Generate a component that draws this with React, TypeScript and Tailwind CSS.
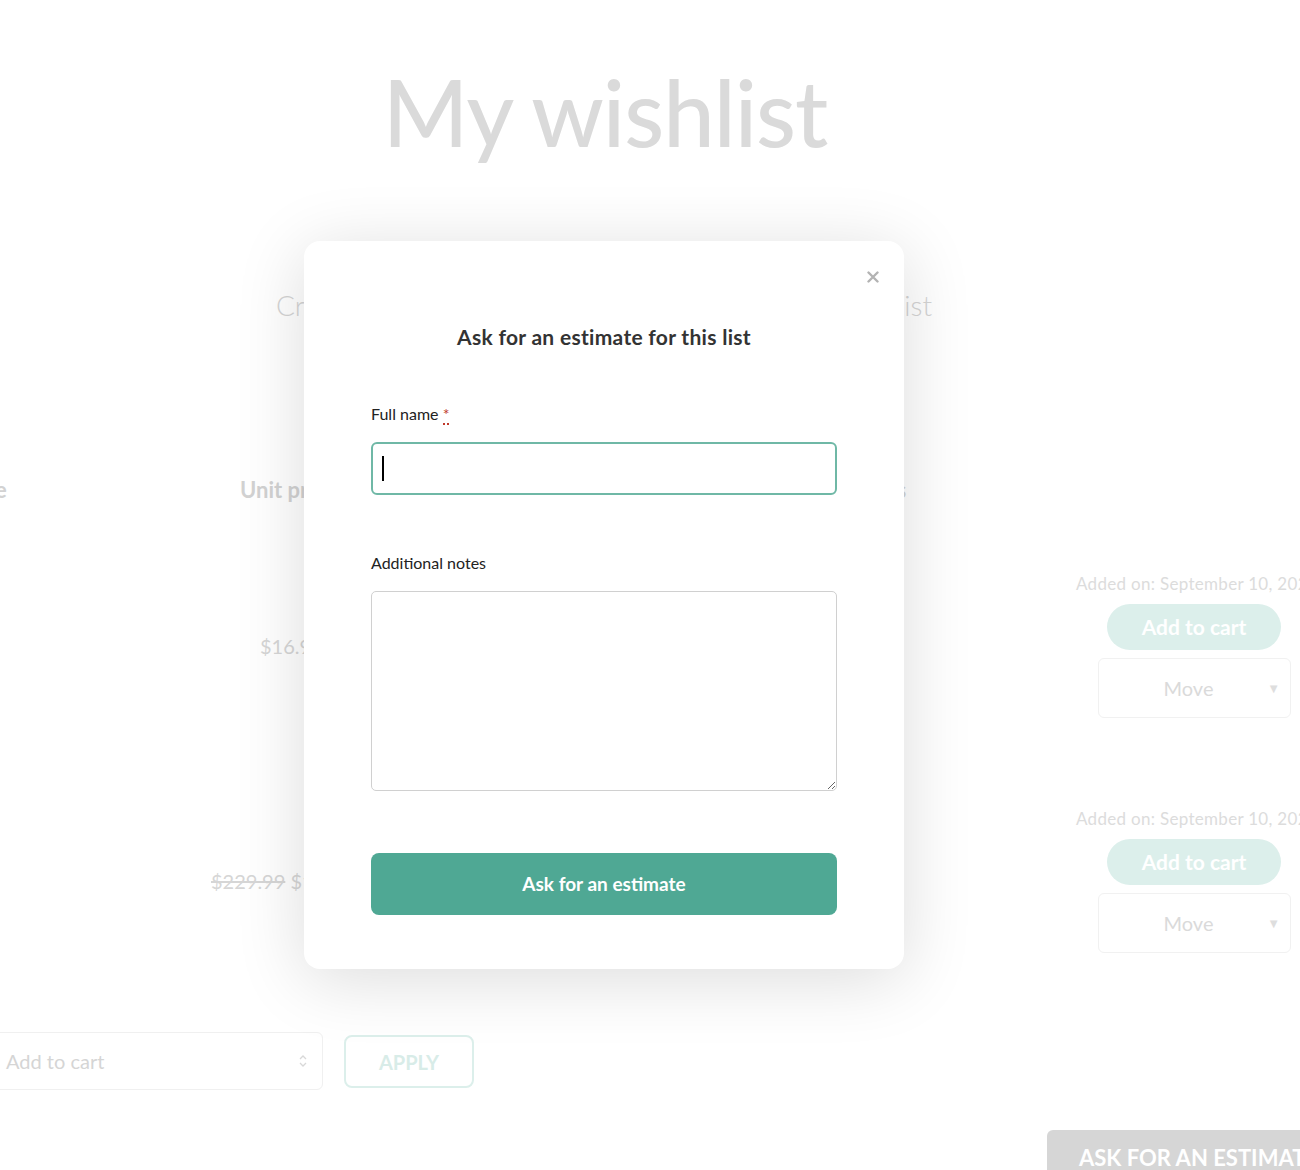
import React from "react";

const font = { fontFamily: "Lato, 'Noto Sans', sans-serif" };

function BgRow({ price, strike }: { price: string; strike?: string }) {
  return (
    <div className="flex h-[235px]">
      <div className="w-[1076px] shrink-0 flex">
        <div className={`${strike ? "w-[211px]" : "w-[260px]"} shrink-0`} />
        <div className="mt-[60px] text-[20px] leading-[24px] text-[#d6d6d6] whitespace-nowrap">
          {strike ? (
            <>
              <span className="line-through">{strike}</span> <span>{price}</span>
            </>
          ) : (
            price
          )}
        </div>
      </div>
      <div className="w-[260px] shrink-0 flex flex-col">
        <div className="text-[17px] leading-[20px] text-[#dcdcdc] whitespace-nowrap tracking-[0.3px]">Added on: September 10, 2024</div>
        <div className="mt-[10px] ml-[31px] w-[174px] h-[46px] rounded-full bg-[#dcefeb] flex items-center justify-center text-white text-[21px] font-bold">
          Add to cart
        </div>
        <div className="mt-[8px] ml-[22px] w-[193px] h-[60px] rounded-[6px] border border-[#f1f1f1] flex items-center relative">
          <span className="flex-1 text-center text-[20px] text-[#dadada] pr-[12px]">Move</span>
          <span className="absolute right-[10px] top-[22px] text-[13px] leading-[14px] text-[#dedede]">▼</span>
        </div>
      </div>
    </div>
  );
}

export default function App() {
  return (
    <div className="relative w-[1300px] h-[1170px] overflow-hidden bg-white" style={font}>
      {/* Background page (faded) */}
      <div className="flex flex-col">
        <h1 className="mt-[64px] pr-[90px] text-center text-[92px] leading-[95px] font-medium text-[#dadada] tracking-[-1px]">My wishlist</h1>
        <div className="mt-[130px] ml-[276px] w-[656px] flex justify-between text-[28px] leading-[32px] font-light text-[#d4d4d4]">
          <span>Create a new list</span>
          <span>Rename this list</span>
        </div>
        <div className="mt-[155px] flex text-[22px] leading-[28px] font-bold text-[#d2d2d2] whitespace-nowrap">
          <div className="w-[370px] -ml-[130px] shrink-0">Product name</div>
          <div className="w-[547px] shrink-0">Unit price</div>
          <div>Stock status</div>
        </div>
        <div className="mt-[70px]">
          <BgRow price="$16.99" />
          <BgRow price="$199.99" strike="$229.99" />
        </div>
        <div className="-mt-[12px] flex items-start">
          <div className="w-[343px] -ml-[20px] h-[58px] rounded-[6px] border border-[#f0f0f0] flex items-center pl-[25px] pr-[14px] text-[20px] text-[#d5d5d5]">
            <span className="flex-1">Add to cart</span>
            <svg width="10" height="16" viewBox="0 0 10 16" fill="none" stroke="#d8d8d8" strokeWidth="1.3">
              <path d="M2 6l3-3 3 3M2 10l3 3 3-3" />
            </svg>
          </div>
          <div className="ml-[21px] mt-[3px] w-[130px] h-[53px] rounded-[8px] border-2 border-[#dcefeb] flex items-center justify-center text-[20px] font-bold text-[#d8ece8]">
            APPLY
          </div>
        </div>
        <div className="mt-[40px] ml-[1047px] w-[300px] h-[60px] rounded-t-[6px] bg-[#d6d6d6] pl-[32px] pt-[11px] text-[22px] font-bold text-white whitespace-nowrap">
          ASK FOR AN ESTIMATE
        </div>
      </div>

      {/* Modal */}
      <div className="absolute left-[304px] top-[241px] w-[600px] h-[728px] rounded-[16px] bg-white px-[67px] pt-[82px] shadow-[0_10px_70px_rgba(0,0,0,0.14)] flex flex-col">
        <button className="absolute right-[25px] top-[30px]" aria-label="Close">
          <svg width="12" height="12" viewBox="0 0 12 12" stroke="#b3b3b3" strokeWidth="2.4" strokeLinecap="round">
            <path d="M1.5 1.5l9 9M10.5 1.5l-9 9" />
          </svg>
        </button>
        <h2 className="text-center text-[21px] leading-[28px] font-bold text-[#333333] tracking-[0.3px]">Ask for an estimate for this list</h2>
        <label className="mt-[51px] text-[16px] leading-[24px] text-[#222222]">
          Full name{" "}
          <abbr className="no-underline text-[#c0392b] border-b-2 border-dotted border-[#c0392b]">*</abbr>
        </label>
        <div className="mt-[16px] h-[53px] rounded-[6px] border-2 border-[#6fb8a6] flex items-center pl-[9px]">
          <span className="block w-[2px] h-[25px] bg-black" />
        </div>
        <label className="mt-[56px] text-[16px] leading-[24px] text-[#222222]">Additional notes</label>
        <textarea className="mt-[16px] h-[200px] w-full rounded-[5px] border border-[#d0d0d0] outline-none" />
        <button className="mt-[62px] h-[62px] rounded-[8px] bg-[#4fa894] text-white text-[19px] font-bold">Ask for an estimate</button>
      </div>
    </div>
  );
}
